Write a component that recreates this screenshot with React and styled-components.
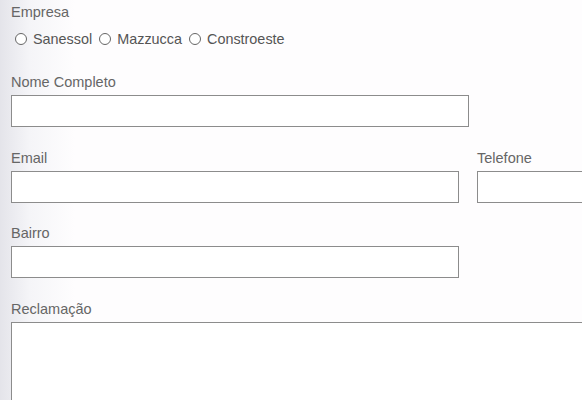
import React from 'react'
import styled, { createGlobalStyle } from 'styled-components'

const GlobalStyle = createGlobalStyle`
    html, body {
        margin: 0;
        padding: 0;
        overflow: hidden;
    }

    body {
        background: linear-gradient(to right, #e4e4ea 0px, #f5f5f8 30px, #fefdfe 75px);
        font-family: 'Liberation Sans', Arial, sans-serif;
    }
`

function App() {
    return (
        <>
            <GlobalStyle />
            <FormStyle>
                <Label>Empresa</Label>
                <RadioGroup>
                    {['Sanessol', 'Mazzucca', 'Constroeste'].map((name) => (
                        <RadioOption key={name}>
                            <RadioCircle />
                            {name}
                        </RadioOption>
                    ))}
                </RadioGroup>

                <Field>
                    <Label>Nome Completo</Label>
                    <Input $width={458} />
                </Field>

                <Row>
                    <Field>
                        <Label>Email</Label>
                        <Input $width={448} />
                    </Field>
                    <Field>
                        <Label>Telefone</Label>
                        <Input $width={220} />
                    </Field>
                </Row>

                <Field>
                    <Label>Bairro</Label>
                    <Input $width={448} />
                </Field>

                <Field>
                    <Label>Reclamação</Label>
                    <TextArea />
                </Field>
            </FormStyle>
        </>
    )
}

export default App

const FormStyle = styled.div`
    padding: 4px 0 0 11px;
    width: 900px;
`

const Label = styled.div`
    font-size: 14.5px;
    line-height: 16px;
    color: #666;
    margin-bottom: 5px;
`

const RadioGroup = styled.div`
    display: flex;
    align-items: center;
    gap: 7px;
    height: 20px;
    margin: 9px 0 25px 4px;
`

const RadioOption = styled.label`
    display: flex;
    align-items: center;
    gap: 6px;
    font-size: 14.4px;
    color: #555;
`

const RadioCircle = styled.span`
    width: 10px;
    height: 10px;
    border: 1px solid #666;
    border-radius: 50%;
    background: #fff;
`

const Field = styled.div`
    margin-bottom: 22.5px;
`

const Row = styled.div`
    display: flex;
    gap: 18px;
`

const Input = styled.div`
    box-sizing: border-box;
    width: ${(p) => p.$width}px;
    height: 32px;
    border: 1px solid #8c8c8c;
    background: #fff;
`

const TextArea = styled.div`
    box-sizing: border-box;
    width: 700px;
    height: 140px;
    border: 1px solid #8c8c8c;
    background: #fff;
`
